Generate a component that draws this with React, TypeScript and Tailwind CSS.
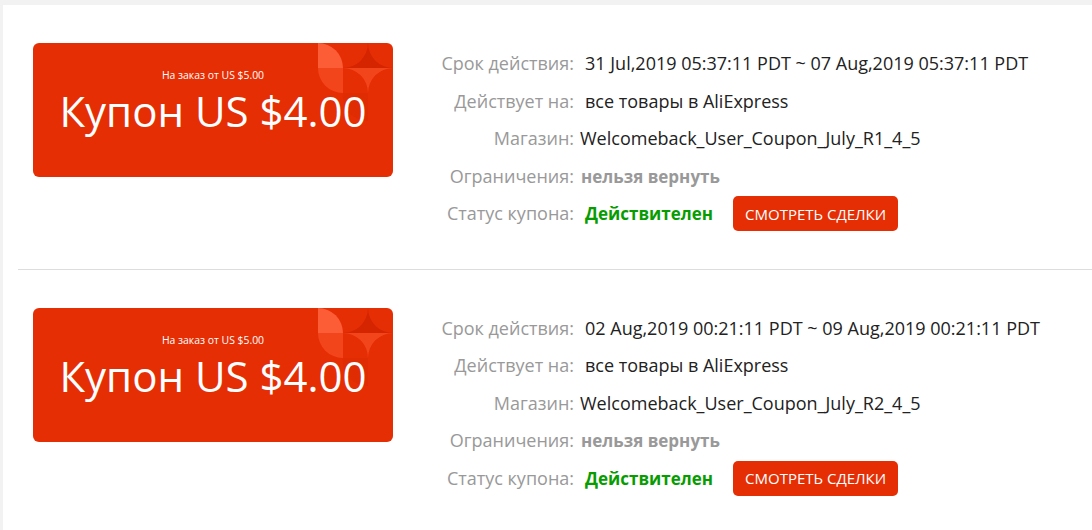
import React from "react";

type Coupon = {
  period: string;
  store: string;
};

const coupons: Coupon[] = [
  {
    period: "31 Jul,2019 05:37:11 PDT ~ 07 Aug,2019 05:37:11 PDT",
    store: "Welcomeback_User_Coupon_July_R1_4_5",
  },
  {
    period: "02 Aug,2019 00:21:11 PDT ~ 09 Aug,2019 00:21:11 PDT",
    store: "Welcomeback_User_Coupon_July_R2_4_5",
  },
];

function Decor() {
  return (
    <svg
      className="absolute right-0 top-0"
      width="75"
      height="100"
      viewBox="0 0 75 100"
    >
      <path d="M0 0 A25 25 0 0 1 25 25 H0 Z" fill="#ff643f" opacity="0.85" />
      <path d="M0 25 H25 V50 A25 25 0 0 1 0 25 Z" fill="#f4481f" opacity="0.9" />
      <path d="M25 25 A25 25 0 0 0 50 0 A25 25 0 0 0 75 25 Z" fill="#d12400" opacity="0.9" />
      <path d="M25 25 A25 25 0 0 1 50 50 A25 25 0 0 1 75 25 Z" fill="#f4481f" opacity="0.9" />
      <path d="M25 50 H50 V78 A25 25 0 0 1 25 50 Z" fill="#d42800" opacity="0.35" />
    </svg>
  );
}

function Row({ label, children }: { label: string; children: React.ReactNode }) {
  return (
    <div className="flex h-[37.5px] items-center">
      <div className="w-[142px] shrink-0 whitespace-nowrap text-right text-[18px] text-[#999999]">{label}</div>
      <div className="ml-[11px] flex items-center whitespace-nowrap text-[18px] text-[#222222]">{children}</div>
    </div>
  );
}

function CouponRow({ c, last }: { c: Coupon; last?: boolean }) {
  return (
    <div className={last ? "ml-[15px]" : "ml-[15px] border-b border-[#dddddd]"}>
      <div className="flex pl-[15px] pt-[38px] pb-[36px]">
        <div className="relative h-[134px] w-[360px] shrink-0 overflow-hidden rounded-[6px] bg-[#e62e04] text-white">
          <Decor />
          <div className="relative flex h-full flex-col items-center pt-[24px]">
            <div className="text-[10.4px] leading-[16px]">На заказ от US $5.00</div>
            <div className="mt-[2px] text-[42px] leading-[52px]">Купон US $4.00</div>
          </div>
        </div>
        <div className="ml-[39px] mt-[2px] flex flex-col">
          <Row label="Срок действия:">{c.period}</Row>
          <Row label="Действует на:">все товары в AliExpress</Row>
          <Row label="Магазин:">
            <span className="-ml-[5px]">{c.store}</span>
          </Row>
          <Row label="Ограничения:">
            <span className="-ml-[4px] text-[17px] font-bold text-[#999999]">нельзя вернуть</span>
          </Row>
          <Row label="Статус купона:">
            <span className="text-[17px] font-bold text-[#079c00]">Действителен</span>
            <button className="ml-[20px] h-[35px] rounded-[5px] bg-[#e62e04] px-[12px] text-[15px] text-white">
              СМОТРЕТЬ СДЕЛКИ
            </button>
          </Row>
        </div>
      </div>
    </div>
  );
}

export default function App() {
  return (
    <div
      className="min-h-[530px] w-full overflow-hidden bg-[#f2f2f2] pl-[3px] pt-[5px]"
      style={{ fontFamily: '"Open Sans", "Noto Sans", sans-serif' }}
    >
      <div className="min-h-[525px] bg-white">
        {coupons.map((c, i) => (
          <CouponRow key={i} c={c} last={i === coupons.length - 1} />
        ))}
      </div>
    </div>
  );
}
